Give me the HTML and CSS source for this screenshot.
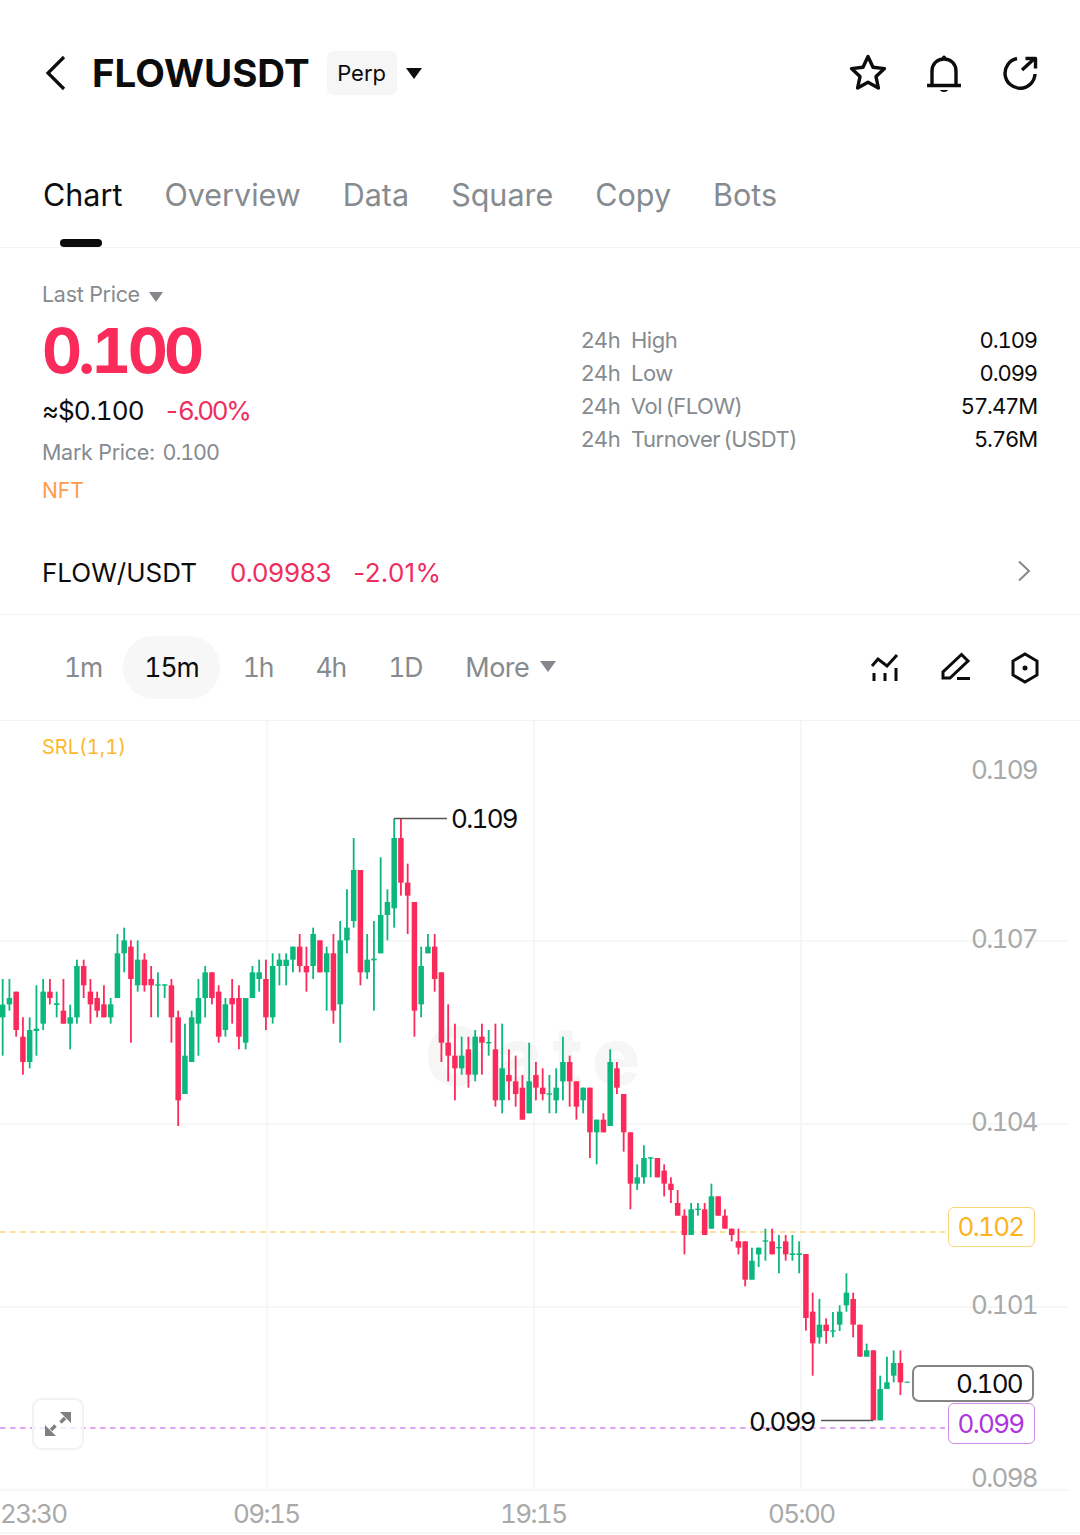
FILE: index.html
```html
<!DOCTYPE html>
<html lang="en">
<head>
  <meta charset="UTF-8" />
  <meta name="viewport" content="width=device-width, initial-scale=1.0"/>
  <title>FLOWUSDT Perp</title>
  <link rel="stylesheet" href="styles.css">
</head>
<body>

<header class="topbar">
  <svg class="back" width="24" height="36" viewBox="0 0 24 36"><path d="M20 2 L4 18 L20 34"/></svg>
  <h1 class="symbol">FLOWUSDT</h1>
  <span class="chip">Perp</span>
  <span class="caret caret-dark"></span>
  <div class="top-icons">
    <svg width="40" height="40" viewBox="0 0 40 40"><path d="M20 3.500 L25 14.200 L36.500 15.600 L28 23.600 L30.400 35 L20 29.300 L9.600 35 L12 23.600 L3.500 15.600 L15 14.200 Z"/></svg>
    <svg width="40" height="40" viewBox="0 0 40 40"><path d="M8 32 V18 C8 11 13 6 20 6 C27 6 32 11 32 18 V32"/><path d="M3 32.500 H37"/><path class="solid" d="M16 37 H24 C23 39.500 17 39.500 16 37 Z"/><circle class="solid" cx="20" cy="4.500" r="2"/></svg>
    <svg width="40" height="40" viewBox="0 0 40 40"><path d="M17 5.500 A15 15 0 1 0 35 21"/><path d="M22 17 L34 6"/><path d="M25.500 5.500 H35.500 V15.500"/></svg>
  </div>
</header>

<nav class="tabs">
  <a class="tab active">Chart</a>
  <a class="tab">Overview</a>
  <a class="tab">Data</a>
  <a class="tab">Square</a>
  <a class="tab">Copy</a>
  <a class="tab">Bots</a>
</nav>

<section class="summary">
  <div class="price-col">
    <div class="last-price">Last Price <span class="caret caret-gray"></span></div>
    <div class="big-price">0.100</div>
    <div class="usd-row"><span class="usd">≈$0.100</span><span class="down">-6.00%</span></div>
    <div class="mark-price">Mark Price: <span class="mark-val">0.100</span></div>
    <div class="sector">NFT</div>
  </div>
  <div class="stats">
    <div class="stat"><span class="stat-pre">24h</span><span class="stat-name">High</span><span class="stat-val">0.109</span></div>
    <div class="stat"><span class="stat-pre">24h</span><span class="stat-name">Low</span><span class="stat-val">0.099</span></div>
    <div class="stat"><span class="stat-pre">24h</span><span class="stat-name">Vol (FLOW)</span><span class="stat-val">57.47M</span></div>
    <div class="stat"><span class="stat-pre">24h</span><span class="stat-name">Turnover (USDT)</span><span class="stat-val">5.76M</span></div>
  </div>
</section>

<section class="spot-row">
  <span class="spot-name">FLOW/USDT</span>
  <span class="spot-price">0.09983</span>
  <span class="spot-change">-2.01%</span>
  <svg class="spot-arrow" width="14" height="22" viewBox="0 0 14 22"><path d="M2 1.500 L12 11 L2 20.500"/></svg>
</section>

<section class="intervals">
  <span class="interval">1m</span>
  <span class="interval selected">15m</span>
  <span class="interval">1h</span>
  <span class="interval">4h</span>
  <span class="interval">1D</span>
  <span class="interval interval-more">More <span class="caret caret-more"></span></span>
  <div class="chart-tools">
    <svg width="32" height="32" viewBox="0 0 32 32"><path d="M3 14 L9 7 L18 14 L28 3"/><path d="M5 21 V29 M16 21 V29 M27 16 V29"/></svg>
    <svg width="32" height="32" viewBox="0 0 32 32"><path d="M4 26 V20 L22.500 2.500 L29 9 L11 26 Z"/><path d="M18 26.500 H31"/></svg>
    <svg width="32" height="32" viewBox="0 0 32 32"><path d="M16 2 L28 9 V23 L16 30 L4 23 V9 Z"/><circle class="solid" cx="16" cy="16" r="2.500"/></svg>
  </div>
</section>

<section class="chart">
  <svg class="plot" width="1080" height="814" viewBox="0 721 1080 814">
    <g class="grid">
      <path d="M267 721 V1490 M534 721 V1490 M801 721 V1490"/>
      <path d="M0 941 H1068 M0 1124 H1068 M0 1307 H1068 M0 1490 H1068 M0 1533 H1080"/>
    </g>
    <text class="watermark" x="425" y="1085">Gate</text>
    <path class="dash dash-yellow" d="M0 1232 H945"/>
    <path class="dash dash-purple" d="M0 1428 H945"/>
    <g id="candles"></g>
    <path class="leader" d="M394 818.500 H447 M821 1420.500 H873"/>
  </svg>

  <span class="srl">SRL(1,1)</span>

  <span class="axis-price p109">0.109</span>
  <span class="axis-price p107">0.107</span>
  <span class="axis-price p104">0.104</span>
  <span class="axis-price p101">0.101</span>
  <span class="axis-price p098">0.098</span>

  <span class="extreme high">0.109</span>
  <span class="extreme low">0.099</span>

  <span class="tag tag-yellow">0.102</span>
  <span class="tag tag-now">0.100</span>
  <span class="tag tag-purple">0.099</span>

  <div class="expand">
    <svg width="48" height="48" viewBox="0 0 48 48"><path class="solid" d="M26 12 H37 V23 Z M11 25 V36 H22 Z"/><path d="M31 18 L26.500 22.500 M21.500 25.500 L17 30"/></svg>
  </div>

  <span class="time t0">23:30</span>
  <span class="time t1">09:15</span>
  <span class="time t2">19:15</span>
  <span class="time t3">05:00</span>
</section>

<script src="chart.js"></script>
</body>
</html>
```
FILE: styles.css
```css
* {
  box-sizing: border-box;
}

body {
  font-family: Inter, 'Liberation Sans', sans-serif;
  background: white;
  color: #0c0c0c;
  margin: 0;
  height: 1535px;
  overflow: hidden;
}

svg path,
svg circle {
  fill: none;
  stroke: currentColor;
}

svg .solid {
  fill: currentColor;
  stroke: none;
}

.caret {
  display: inline-block;
  width: 0;
  height: 0;
  border-style: solid;
  border-color: currentColor transparent transparent transparent;
}

.caret-dark {
  border-width: 11px 8px 0 8px;
  margin-left: 9px;
}

.caret-gray {
  border-width: 10px 7px 0 7px;
  color: #84888c;
  margin-left: 3px;
  vertical-align: 0;
}

.caret-more {
  border-width: 11px 8px 0 8px;
  color: #84888c;
  margin-left: 4px;
  vertical-align: 5px;
}

/* top bar */
.topbar {
  display: flex;
  align-items: center;
  padding: 51px 40px 0 44px;
}

.back path {
  stroke-width: 3.200px;
}

.symbol {
  margin: 0 0 0 24px;
  font-size: 38.500px;
  font-weight: 700;
  line-height: 42px;
}

.chip {
  margin-left: 17px;
  width: 70px;
  height: 44px;
  line-height: 44px;
  text-align: center;
  font-size: 22px;
  background: #f6f6f6;
  border-radius: 7px;
}

.top-icons {
  display: flex;
  gap: 36px;
  margin-left: auto;
}

.top-icons path {
  stroke-width: 3.400px;
  stroke-linejoin: round;
}

/* tabs */
.tabs {
  display: flex;
  gap: 42px;
  margin-top: 72px;
  height: 81px;
  padding: 0 43px;
  border-bottom: 1px solid #f3f3f3;
}

.tab {
  position: relative;
  font-size: 30.500px;
  line-height: 56px;
  color: #868b8f;
}

.tab.active {
  color: #0c0c0c;
}

.tab.active::after {
  content: '';
  position: absolute;
  left: 17px;
  bottom: 0;
  width: 42px;
  height: 8px;
  border-radius: 4px;
  background: #0c0c0c;
}

/* price summary */
.summary {
  display: flex;
  justify-content: space-between;
  padding: 31px 43px 29px 42px;
}

.last-price,
.mark-price {
  font-size: 21.500px;
  line-height: 30px;
  letter-spacing: -0.300px;
  color: #868b8f;
}

.big-price {
  margin-top: 7px;
  font-size: 62px;
  font-weight: 700;
  line-height: 70px;
  letter-spacing: -0.060em;
  color: #fa2a5a;
  font-feature-settings: 'tnum';
}

.usd-row {
  display: flex;
  gap: 20px;
  margin-top: 7px;
  font-size: 26px;
  line-height: 36px;
  font-feature-settings: 'tnum';
}

.usd {
  letter-spacing: -0.035em;
}

.down {
  color: #ee2e5f;
  letter-spacing: -0.090em;
}

.mark-price {
  margin-top: 8px;
}

.mark-val {
  margin-left: 2px;
  font-feature-settings: 'tnum';
  letter-spacing: -0.050em;
}

.sector {
  margin-top: 9px;
  font-size: 21px;
  line-height: 30px;
  color: #ff9a4d;
}

.stats {
  width: 456px;
  margin-top: 45px;
}

.stat {
  display: flex;
  font-size: 22px;
  line-height: 33px;
  color: #868b8f;
}

.stat-pre {
  width: 50px;
  letter-spacing: -0.300px;
}

.stat-name {
  letter-spacing: -0.500px;
  word-spacing: -2px;
}

.stat-val {
  margin-left: auto;
  color: #0c0c0c;
  font-feature-settings: 'tnum';
  letter-spacing: -0.050em;
}

/* spot pair row */
.spot-row {
  display: flex;
  align-items: center;
  height: 80px;
  padding: 0 49px 4px 42px;
  border-bottom: 1px solid #f3f3f3;
  font-size: 26px;
}

.spot-price {
  margin-left: 33px;
  color: #ee2e5f;
  letter-spacing: -0.300px;
}

.spot-change {
  margin-left: 22px;
  color: #ee2e5f;
  letter-spacing: 0.300px;
}

.spot-arrow {
  margin-left: auto;
  margin-top: -4px;
  color: #84888c;
}

.spot-arrow path {
  stroke-width: 2px;
}

/* interval switcher */
.intervals {
  display: flex;
  align-items: center;
  height: 106px;
  padding: 0 39px 0 43px;
  border-bottom: 1px solid #f3f3f3;
}

.interval {
  padding: 0 21px;
  height: 63px;
  line-height: 63px;
  font-size: 26.500px;
  font-feature-settings: 'tnum';
  letter-spacing: -0.040em;
  color: #868b8f;
}

.interval.selected {
  margin-right: 2px;
  background: #f7f7f7;
  border-radius: 31px;
  color: #0c0c0c;
}

.interval-more {
  margin-left: 1px;
  font-size: 27px;
  letter-spacing: -0.020em;
}

.chart-tools {
  display: flex;
  gap: 38px;
  margin-left: auto;
}

.chart-tools path {
  stroke-width: 3px;
  stroke-linejoin: miter;
}

/* chart */
.chart {
  position: relative;
  height: 814px;
  font-feature-settings: 'tnum';
}

.plot {
  display: block;
}

.grid path {
  stroke: #f5f5f5;
  stroke-width: 1.500px;
}

.watermark {
  font-size: 80px;
  font-weight: 800;
  letter-spacing: 10px;
  fill: #f6f6f6;
}

.dash {
  stroke-width: 1.600px;
  stroke-dasharray: 5.500 4.500;
}

.dash-yellow {
  stroke: #fbd677;
}

.dash-purple {
  stroke: #d28aef;
}

.leader {
  stroke: #555;
  stroke-width: 1.500px;
}

.srl {
  position: absolute;
  left: 42px;
  top: 13px;
  font-size: 20px;
  line-height: 26px;
  color: #fcb92e;
}

.axis-price {
  position: absolute;
  right: 43px;
  font-size: 26px;
  line-height: 30px;
  letter-spacing: -0.065em;
  color: #a9a9a9;
}

.p109 { top: 34px; }
.p107 { top: 203px; }
.p104 { top: 386px; }
.p101 { top: 569px; }
.p098 { top: 742px; }

.extreme {
  position: absolute;
  font-size: 26px;
  line-height: 30px;
  letter-spacing: -0.065em;
}

.high { left: 451px; top: 83px; }
.low { left: 749px; top: 686px; }

.tag {
  position: absolute;
  border: 1.500px solid;
  border-radius: 6px;
  font-size: 26px;
  letter-spacing: -0.065em;
  text-align: center;
  background: white;
}

.tag-yellow {
  left: 948px;
  top: 486px;
  width: 87px;
  height: 40px;
  line-height: 37px;
  padding-right: 2px;
  color: #fbb41e;
  border-color: #fbd677;
}

.tag-now {
  left: 912px;
  top: 644px;
  width: 122px;
  height: 37px;
  line-height: 34px;
  padding-right: 10px;
  text-align: right;
  border: 2px solid #858585;
  border-radius: 7px;
}

.tag-purple {
  left: 948px;
  top: 682px;
  width: 87px;
  height: 41px;
  line-height: 39px;
  padding-right: 2px;
  color: #ac35de;
  border-color: #d08ceb;
}

.expand {
  position: absolute;
  left: 32px;
  top: 677px;
  width: 52px;
  height: 52px;
  border: 2px solid #f2f2f2;
  border-radius: 9px;
  background: rgba(255, 255, 255, 0.75);
  color: #808080;
}

.expand svg {
  display: block;
}

.expand path {
  stroke-width: 3.500px;
}

.time {
  position: absolute;
  top: 778px;
  font-size: 26px;
  line-height: 30px;
  letter-spacing: -0.060em;
  color: #a9a9a9;
}

.t0 { left: 0; }
.t1 { left: 233px; }
.t2 { left: 500px; }
.t3 { left: 768px; }
```
FILE: chart.js
```js
// candles: [colour, wick top, body top, body bottom, wick bottom]
// y values are thirds of a pixel, counted from each block's top
const blocks = [
  { top: 800, rows: [
    ['g',537,614,652,767],['g',537,594,613,632],['r',575,575,690,710],['r',652,710,786,824],
    ['g',652,690,786,805],['g',556,686,693,767],['g',537,575,671,690],['r',537,575,594,613],
    ['g',575,610,615,652],['r',537,632,671,671],['g',614,652,671,748],['g',479,498,652,671],
    ['r',479,498,556,594],['r',537,575,613,671],['r',575,594,632,652],['r',556,613,652,652],
    ['g',594,613,652,671],['g',402,460,594,594],['g',383,421,460,517],['r',421,440,537,728],
    ['g',421,479,556,575],['r',460,479,556,575],['r',498,537,556,652],['g',517,553,557,652],
    ['g',553,553,557,594],['r',537,556,652,728],['r',632,652,901,978],['g',671,767,882,882],
    ['g',632,652,786,786],['g',537,594,671,767],['g',498,517,594,652],['r',517,517,594,613],
    ['r',556,575,710,728],['g',594,613,690,710],['r',537,594,613,671],['r',556,594,710,748],
    ['g',594,594,728,748],['g',498,517,594,594],['g',479,517,537,575],['r',479,537,652,690],
    ['g',460,498,652,671],['g',460,479,498,556],['g',460,479,498,556],['g',440,440,479,517],
    ['r',402,440,498,517],['r',440,498,517,575],['g',383,402,498,537],['r',421,421,517,517],
    ['g',440,460,517,632],['r',402,460,632,671],['g',363,421,613,728],['g',268,383,421,460],
    ['g',114,210,363,383],['r',210,210,517,556],['g',402,479,517,537],['g',363,476,481,632],
    ['g',172,345,460,460],['g',268,306,345,421],['g',56,114,325,383],['r',56,114,248,287],
    ['r',191,248,287,402],['r',306,306,632,710],['g',440,498,613,652],['g',402,440,460,460],
    ['r',402,440,537,575],['r',517,517,728,786],['r',613,728,767,844],['r',671,767,805,901],
    ['g',710,767,805,824],['r',710,748,824,863],['g',690,710,824,844],['r',671,710,728,824],
    ['g',690,726,730,767],['r',671,748,901,920],['g',671,805,901,940],['r',748,825,844,901],
    ['r',767,844,882,920],['r',825,863,959,959],['g',728,844,940,940],['r',786,825,863,901]
  ] },
  { top: 1020, rows: [
    ['r',145,203,222,241],['g',165,220,224,280],['g',145,203,241,280],['g',50,126,184,241],
    ['r',107,126,184,260],['r',184,184,260,299],['g',203,203,241,280],['r',203,203,337,414],
    ['g',299,299,337,433],['r',280,299,337,337],['g',88,126,318,318],['r',126,145,203,222],
    ['r',222,222,337,395],['r',337,337,491,568],['g',433,472,491,510],['g',376,414,472,491],
    ['g',412,412,416,472],['r',414,414,472,472],['r',433,452,491,529],['r',472,491,510,549],
    ['r',510,549,587,587],['r',568,587,645,703],['g',549,568,645,645],['g',549,566,570,587],
    ['r',549,568,645,645],['g',491,529,626,626],['r',529,529,587,587],['r',568,587,626,626],
    ['r',626,626,645,664],['r',626,664,683,703],['r',664,664,779,799],['g',683,722,779,779],
    ['g',683,683,703,741],['g',626,661,665,722],['r',626,664,703,703],['g',645,681,685,760],
    ['r',645,664,703,722],['g',645,700,705,722],['g',664,700,705,760]
  ] },
  { top: 1190, rows: [
    ['r',192,192,384,422],['r',308,365,460,557],['g',327,404,442,461],['r',385,404,423,461],
    ['g',366,421,425,442],['g',346,365,404,423],['g',250,308,346,365],['r',308,327,404,442],
    ['r',404,404,500,500],['g',461,481,500,500],['r',481,481,691,691],['g',557,597,691,691],
    ['g',500,577,597,597],['g',481,519,557,577],['r',481,519,577,615],['g',575,575,578,578]
  ] }
];

const STEP = 6.75;
const BODY = 5.5;
const WICK = 1.8;
const COLORS = { g: '#0bb77c', r: '#fa2a5a' };

const group = document.getElementById('candles');

function addRect(x, y, w, h, fill) {
  const rect = document.createElementNS('http://www.w3.org/2000/svg', 'rect');
  rect.setAttribute('x', x);
  rect.setAttribute('y', y);
  rect.setAttribute('width', w);
  rect.setAttribute('height', h);
  rect.setAttribute('fill', fill);
  group.appendChild(rect);
}

let index = 0;
blocks.forEach(block => {
  block.rows.forEach(([color, wickTop, bodyTop, bodyBottom, wickBottom]) => {
    const cx = 2.67 + STEP * index;
    const toY = v => block.top + v / 3;
    addRect(cx - WICK / 2, toY(wickTop), WICK, (wickBottom - wickTop) / 3, COLORS[color]);
    addRect(cx - BODY / 2, toY(bodyTop), BODY, (bodyBottom - bodyTop) / 3, COLORS[color]);
    index++;
  });
});
```
